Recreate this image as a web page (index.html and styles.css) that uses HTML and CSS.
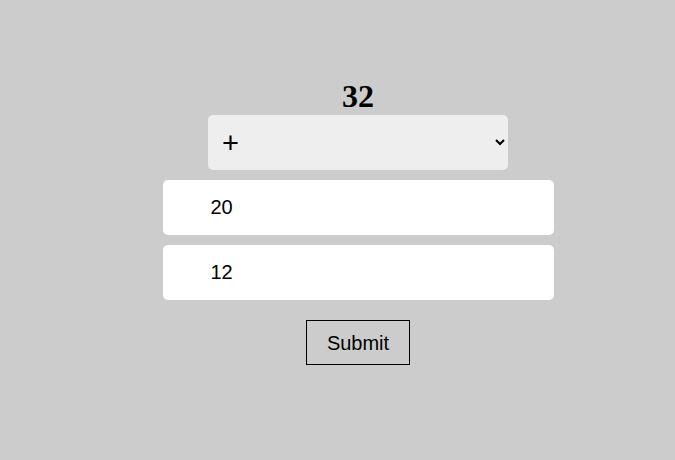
FILE: index.html
```html
<!DOCTYPE html>
<html>
<head>
<meta charset="utf-8">
<link rel="stylesheet" href="styles.css">
</head>
<body>
<main class="calc">
  <h1 class="result">32</h1>
  <select class="op">
    <option>+</option>
    <option>-</option>
    <option>*</option>
    <option>/</option>
  </select>
  <input class="num" type="text" value="20">
  <input class="num" type="text" value="12">
  <button class="submit">Submit</button>
</main>
</body>
</html>
```
FILE: styles.css
```css
html, body {
  margin: 0;
  padding: 0;
  background: #cccccc;
  height: 100%;
}
.calc {
  display: flex;
  flex-direction: column;
  align-items: center;
  padding-top: 78px;
  padding-left: 41px;
  font-family: "Liberation Sans", Arial, sans-serif;
}
.result {
  margin: 0 0 1px 0;
  font-family: "Liberation Serif", "Times New Roman", serif;
  font-size: 32px;
  font-weight: bold;
  line-height: 36px;
  color: #000;
}
.op {
  box-sizing: border-box;
  width: 300px;
  height: 55px;
  border: none;
  border-radius: 5px;
  background: #eeeeee;
  font-family: "Liberation Sans", Arial, sans-serif;
  font-size: 29px;
  padding: 0 6px 0 10px;
  color: #000;
  margin-bottom: 10px;
}
.num {
  box-sizing: border-box;
  width: 391px;
  height: 55px;
  border: none;
  border-radius: 5px;
  background: #ffffff;
  font-family: "Liberation Sans", Arial, sans-serif;
  font-size: 20px;
  padding: 0 48px;
  color: #000;
  margin-bottom: 10px;
}
.submit {
  margin-top: 10px;
  box-sizing: border-box;
  width: 104px;
  height: 45px;
  border: 1px solid #000;
  background: transparent;
  font-family: "Liberation Sans", Arial, sans-serif;
  font-size: 20px;
  color: #000;
  padding: 2px 0 0 0;
  border-radius: 0;
}
```
